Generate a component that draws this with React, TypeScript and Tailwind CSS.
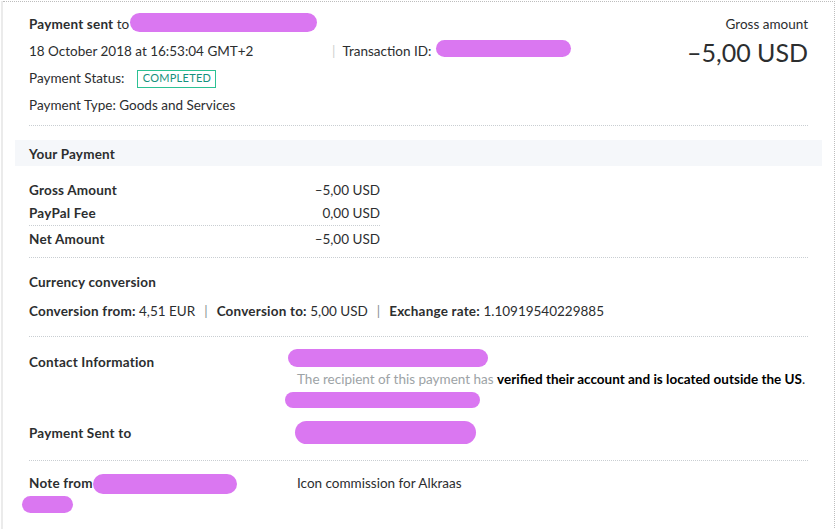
import React from "react";

const blobs = [
  { x: 130, y: 13, w: 187, h: 19 },
  { x: 436, y: 40, w: 135, h: 17 },
  { x: 288, y: 349, w: 200, h: 18 },
  { x: 285, y: 392, w: 195, h: 16 },
  { x: 295, y: 421, w: 181, h: 23 },
  { x: 93, y: 474, w: 144, h: 20 },
  { x: 22, y: 496, w: 51, h: 17 },
];

function Row({ label, value, className }: { label: string; value: string; className?: string }) {
  return (
    <div className={`flex items-center justify-between ${className ?? "h-[24px]"}`}>
      <span className="font-bold tracking-[0.2px]">{label}</span>
      <span>{value}</span>
    </div>
  );
}

export default function App() {
  return (
    <div
      className="relative h-[529px] w-[840px] overflow-hidden bg-white text-[13.5px] text-[#2c2e2f]"
      style={{ fontFamily: "Lato, 'Open Sans', sans-serif" }}
    >
      <div className="ml-[1px] h-full w-[834px] border-l-2 border-[#ebebeb]">
        <div className="mt-[1px] h-full border-t border-r border-dotted border-[#bdbdbd] px-3">
          {/* header */}
          <div className="px-[14px] pt-[9px]">
            <div className="flex justify-between">
              <div>
                <div className="flex h-[27px] items-center">
                  <span className="font-bold tracking-[0.2px]">Payment sent</span>&nbsp;to
                </div>
                <div className="flex h-[27px] items-center">
                  <span className="w-[303px]">18 October 2018 at 16:53:04 GMT+2</span>
                  <span className="mr-[7px] text-[#cfcfcf]">|</span>
                  <span>Transaction ID:</span>
                </div>
                <div className="flex h-[27px] items-center">
                  <span>Payment Status:</span>
                  <span className="ml-[13px] flex h-[18px] w-[79px] items-center justify-center border border-[#2cc194] text-[11px] tracking-wide text-[#15917d]">
                    COMPLETED
                  </span>
                </div>
                <div className="flex h-[27px] items-center">Payment Type: Goods and Services</div>
              </div>
              <div className="text-right">
                <div className="flex h-[27px] items-center justify-end">Gross amount</div>
                <div className="text-[25px] leading-[28px]">–5,00 USD</div>
              </div>
            </div>
            <div className="mt-[6px] border-t border-dotted border-[#c9ced2]" />
          </div>

          {/* your payment */}
          <div className="mt-[14px] flex h-[26px] items-center bg-[#f5f7fa] px-[14px] pt-[2px] font-bold tracking-[0.2px]">
            Your Payment
          </div>
          <div className="px-[14px]">
            <div className="mt-[12px] w-[351px]">
              <Row label="Gross Amount" value="–5,00 USD" />
              <Row label="PayPal Fee" value="0,00 USD" className="h-[24px] border-b border-dotted border-[#c9ced2]" />
              <Row label="Net Amount" value="–5,00 USD" className="h-[26px]" />
            </div>
            <div className="mt-[5px] border-t border-dotted border-[#c9ced2]" />

            <div className="mt-[12px] flex h-[24px] items-center font-bold tracking-[0.2px]">Currency conversion</div>
            <div className="mt-[5px] flex h-[24px] items-center">
              <span className="font-bold tracking-[0.2px]">Conversion from:</span>&nbsp;4,51 EUR
              <span className="mx-[9px] text-[#8a8f93]">|</span>
              <span className="font-bold tracking-[0.2px]">Conversion to:</span>&nbsp;5,00 USD
              <span className="mx-[9px] text-[#8a8f93]">|</span>
              <span className="font-bold tracking-[0.2px]">Exchange rate:</span>&nbsp;1.10919540229885
            </div>
            <div className="mt-[13px] border-t border-dotted border-[#c9ced2]" />

            <div className="mt-[9px] flex">
              <div className="w-[268px] pt-[5px] font-bold leading-[22px] tracking-[0.2px]">Contact Information</div>
              <div className="leading-[22px]">
                <div className="h-[22px] text-[#9da3a6]">payer</div>
                <div>
                  <span className="text-[#9da3a6]">The recipient of this payment has </span>
                  <span className="font-bold text-black">verified their account and is located outside the US</span>.
                </div>
                <div className="h-[22px]" />
              </div>
            </div>
            <div className="mt-[9px] flex h-[24px] items-center font-bold tracking-[0.2px]">Payment Sent to</div>
            <div className="mt-[15px] border-t border-dotted border-[#c9ced2]" />

            <div className="mt-[10px] flex h-[24px] items-center">
              <span className="w-[268px] font-bold tracking-[0.2px]">Note from</span>
              <span>Icon commission for Alkraas</span>
            </div>
          </div>
        </div>
      </div>

      {blobs.map((b, i) => (
        <span
          key={i}
          className="absolute rounded-full bg-[#da77f1]"
          style={{ left: b.x, top: b.y, width: b.w, height: b.h }}
        />
      ))}
    </div>
  );
}
